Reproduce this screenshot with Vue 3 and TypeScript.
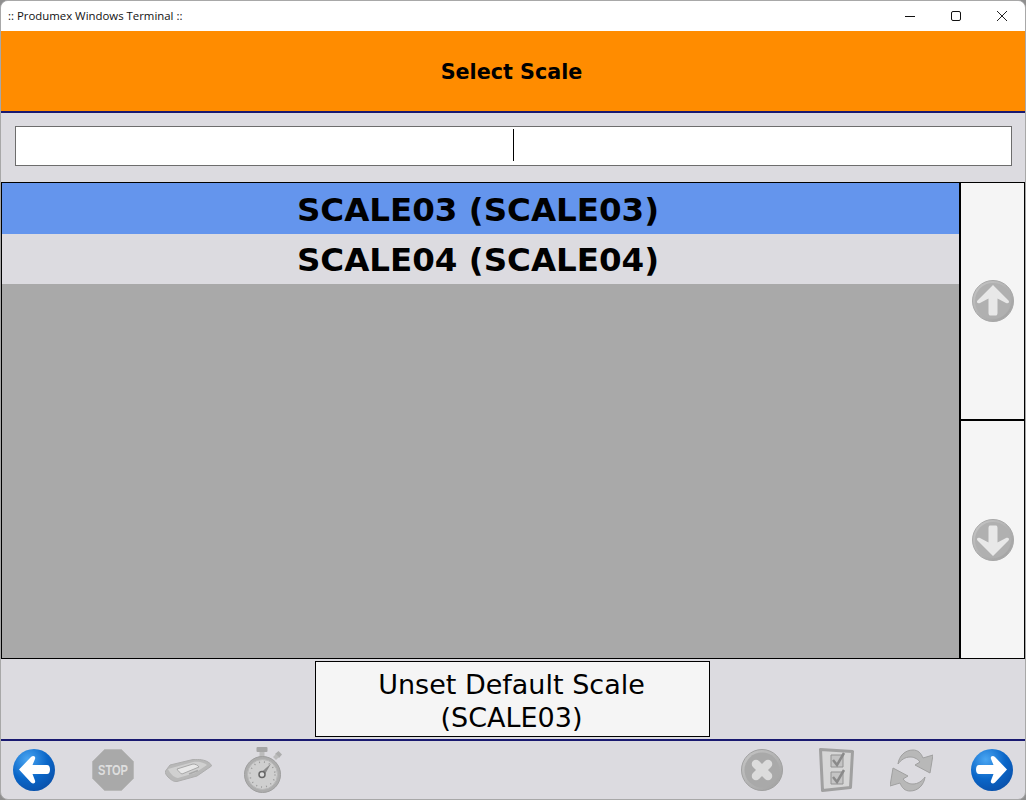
<script setup lang="ts">
const items = [
  { label: 'SCALE03 (SCALE03)', selected: true },
  { label: 'SCALE04 (SCALE04)', selected: false }
]

const arrowPath =
  'M22 6 37.500 21.500c1.500 2-.5 3.500-2.500 2.500L26.500 19.500V34c0 2-1 2.500-2 2.500h-5c-1 0-2-.5-2-2.500V19.500L9 24c-2 1-4-.5-2.500-2.500z'
const turnPath =
  'M8 15C9 7 15 1 23 1c5 0 8 3 10 8l10-3-3 18-15-8 5-3c-3-4-7-5-10-5-5 0-9 3-12 7z'
</script>

<template>
  <div class="window">
    <div class="titlebar">
      <span class="app-title">:: Produmex Windows Terminal ::</span>
      <div class="controls">
        <svg width="46" height="30" viewBox="0 0 46 30"><path d="M18 15.500h10" stroke="#111" stroke-width="1" fill="none" /></svg>
        <svg width="46" height="30" viewBox="0 0 46 30"><rect x="18.500" y="10.500" width="9" height="9" rx="1.500" stroke="#111" stroke-width="1" fill="none" /></svg>
        <svg width="46" height="30" viewBox="0 0 46 30"><path d="M18 10l10 10M28 10l-10 10" stroke="#222" stroke-width="1" fill="none" /></svg>
      </div>
    </div>

    <header class="page-head">Select Scale</header>

    <div class="search-zone">
      <div class="search-box"><i class="caret"></i></div>
    </div>

    <div class="list-zone">
      <ul class="list">
        <li v-for="item in items" :key="item.label" :class="{ selected: item.selected }">{{ item.label }}</li>
      </ul>
      <div class="scroller">
        <div class="scroll-btn up">
          <svg width="44" height="44" viewBox="0 0 44 44">
            <defs>
              <linearGradient id="greyDisc" x1="0" y1="0" x2="1" y2="1">
                <stop offset="0" stop-color="#c6c6c6" />
                <stop offset="1" stop-color="#a0a0a0" />
              </linearGradient>
            </defs>
            <circle cx="22" cy="22" r="20.500" fill="url(#greyDisc)" stroke="#a8a8a8" />
            <circle cx="22" cy="22" r="18" fill="#b0b0b0" />
            <path :d="arrowPath" fill="#e8e8e8" />
          </svg>
        </div>
        <div class="scroll-btn">
          <svg width="44" height="44" viewBox="0 0 44 44">
            <circle cx="22" cy="22" r="20.500" fill="url(#greyDisc)" stroke="#a8a8a8" />
            <circle cx="22" cy="22" r="18" fill="#b0b0b0" />
            <path :d="arrowPath" fill="#e8e8e8" transform="rotate(180 22 22)" />
          </svg>
        </div>
      </div>
    </div>

    <div class="action-zone">
      <button class="action">Unset Default Scale<br />(SCALE03)</button>
    </div>

    <footer class="nav">
      <div class="nav-group">
        <svg width="42" height="42" viewBox="0 0 42 42">
          <defs>
            <radialGradient id="blueDisc" cx=".35" cy=".25" r=".85">
              <stop offset="0" stop-color="#4aa6f2" />
              <stop offset=".55" stop-color="#0a66c8" />
              <stop offset="1" stop-color="#0a4ea6" />
            </radialGradient>
          </defs>
          <circle cx="21" cy="21" r="21" fill="url(#blueDisc)" />
          <path d="M6 20.500 18 8c2-2 5-1 4 2l-2.500 6H34c2 0 3 2 3 4.500S36 25 34 25H19.500l2.500 6.500c1 3-2 4-4 2z" fill="#fff" />
        </svg>
        <svg class="stop" width="42" height="42" viewBox="0 0 42 42">
          <path d="M12.500.5h17l12 12v17l-12 12h-17L.5 29.500v-17z" fill="#a9a9a9" stroke="#b8b8b8" />
          <text x="21" y="26" text-anchor="middle" textLength="30" lengthAdjust="spacingAndGlyphs" class="stop-text">STOP</text>
        </svg>
        <svg class="device" width="47" height="23" viewBox="0 0 47 23">
          <path d="M.5 12 5 6 28 .5c6-.5 12 .5 15 2.500 2.500 1.500 3.500 3 3.500 4L32 17 12 22.500c-3 .5-6-1.500-9-4.500C1 16 0 14 .5 12z" fill="#b8b8b8" stroke="#adadad" />
          <path d="M3 10 28 3c5-.5 10 0 14 3L30 14 13 19c-3 0-8-4-10-9z" fill="#d0d0d0" />
          <path d="M12 10 28 5c2 0 5 1 6 3L17 15c-2-1-4-3-5-5z" fill="#e8e8e8" stroke="#a8a8a8" />
          <path d="M24 15l9-3.500" stroke="#a8a8a8" stroke-width="1.500" />
        </svg>
        <svg class="watch" width="38" height="46" viewBox="0 0 38 46">
          <rect x="12.500" y="0" width="11" height="5" rx="1" fill="#a6a6a6" />
          <rect x="15.500" y="5" width="5" height="6" fill="#bcbcbc" />
          <path d="m31 7 3.500-3 3.500 3.500-3 3.500z" fill="#adadad" />
          <path d="m29 10 3-3 3 3-3 3z" fill="#bcbcbc" />
          <circle cx="18.500" cy="27.500" r="18" fill="#adadad" stroke="#9e9e9e" />
          <circle cx="18.500" cy="27.500" r="15" fill="#cfcfcf" stroke="#b8b8b8" />
          <circle cx="18.500" cy="27.500" r="12.500" fill="none" stroke="#9a9a9a" stroke-width="1.500" stroke-dasharray="1 4" />
          <path d="M16.500 26 27 16.500 20 29z" fill="#8c8c8c" />
          <circle cx="18" cy="27.500" r="3" fill="#dcdcdc" stroke="#666" stroke-width="1.500" />
        </svg>
      </div>
      <div class="nav-group">
        <svg width="42" height="42" viewBox="0 0 42 42">
          <circle cx="21" cy="21" r="20.500" fill="url(#greyDisc)" stroke="#a0a0a0" />
          <circle cx="21" cy="21" r="17.500" fill="#a9a9a9" />
          <path d="M15 15 27 27M27 15 15 27" stroke="#dcdcdc" stroke-width="8.500" stroke-linecap="round" />
        </svg>
        <svg class="check" width="35" height="46" viewBox="0 0 35 46">
          <path d="M1.500 2.500 33.500 4.500 31.500 40.500 3.500 43.500z" fill="#d6d6d6" stroke="#a0a0a0" stroke-width="3" stroke-linejoin="round" />
          <path d="M12 8h12v12H12zM12 25h12v12H12z" fill="#c4c4c4" stroke="#929292" />
          <path d="m14 13 4 5 7-12M14 30l4 5 7-12" fill="none" stroke="#8a8a8a" stroke-width="2.500" />
        </svg>
        <svg class="refresh" width="43" height="43" viewBox="0 0 43 43">
          <path :d="turnPath" fill="#b8b8b8" stroke="#a0a0a0" />
          <path :d="turnPath" fill="#b8b8b8" stroke="#a0a0a0" transform="rotate(180 21.500 21.500)" />
        </svg>
        <svg class="next" width="42" height="42" viewBox="0 0 42 42">
          <circle cx="21" cy="21" r="21" fill="url(#blueDisc)" />
          <path d="M36 20.500 24 8c-2-2-5-1-4 2l2.500 6H8c-2 0-3 2-3 4.500S6 25 8 25h14.500L20 31.500c-1 3 2 4 4 2z" fill="#fff" />
        </svg>
      </div>
    </footer>
  </div>
</template>

<style scoped>
.window {
  box-sizing: border-box;
  width: 1026px;
  height: 800px;
  display: flex;
  flex-direction: column;
  background: #dcdbe0;
  border: 1px solid #a8a8a8;
  border-radius: 8px;
  overflow: hidden;
  font-family: "DejaVu Sans", sans-serif;
  color: #000;
}

.titlebar {
  height: 30px;
  flex: none;
  display: flex;
  align-items: center;
  justify-content: space-between;
  background: #fff;
}

.app-title {
  padding: 0 0 1px 7px;
  font-family: "Open Sans", "Noto Sans", sans-serif;
  font-size: 11.400px;
  color: #111;
}

.controls {
  display: flex;
  height: 30px;
}

.page-head {
  height: 80px;
  flex: none;
  display: flex;
  align-items: center;
  justify-content: center;
  box-sizing: border-box;
  padding: 2px 3px 0 0;
  background: #ff8c00;
  font-size: 20.700px;
  font-weight: 700;
}

.search-zone {
  flex: none;
  padding: 13px 13px 16px 14px;
  border-top: 2px solid #191970;
}

.search-box {
  height: 38px;
  position: relative;
  background: #fff;
  border: 1px solid #6d6d6d;
}

.caret {
  position: absolute;
  left: 497px;
  top: 2px;
  width: 1px;
  height: 32px;
  background: #000;
}

.list-zone {
  height: 477px;
  flex: none;
  display: flex;
  box-sizing: border-box;
  border: 1px solid #000;
}

.list {
  flex: 1;
  margin: 0;
  padding: 0;
  list-style: none;
  background: #a9a9a9;
}

.list li {
  height: 50.500px;
  box-sizing: border-box;
  display: flex;
  align-items: center;
  justify-content: center;
  padding: 3px 5px 0 0;
  background: #dcdbe0;
  font-size: 32.500px;
  font-weight: 700;
}

.list li.selected {
  background: #6495ed;
}

.scroller {
  width: 63px;
  flex: none;
  display: flex;
  flex-direction: column;
  border-left: 2px solid #000;
}

.scroll-btn {
  flex: 1;
  display: flex;
  align-items: center;
  justify-content: center;
  background: #f5f5f5;
  border-top: 2px solid #000;
}

.scroll-btn.up {
  height: 236px;
  flex: none;
  border-top: none;
}

.action-zone {
  flex: none;
  display: flex;
  justify-content: center;
  padding: 2px 0;
}

.action {
  box-sizing: border-box;
  width: 395px;
  height: 76px;
  margin-left: -1px;
  padding: 3px 2px 0 0;
  background: #f5f5f5;
  border: 1px solid #000;
  border-radius: 0;
  font-family: inherit;
  font-size: 27px;
  line-height: 33px;
  color: #000;
}

.nav {
  flex: 1;
  display: flex;
  align-items: center;
  justify-content: space-between;
  padding: 0 12px;
  border-top: 2px solid #191970;
}

.nav-group {
  display: flex;
  align-items: center;
}

.stop { margin-left: 37px; overflow: visible; }
.device { margin-left: 31px; }
.watch { margin-left: 32px; margin-top: -1px; }
.check { margin-left: 36px; }
.refresh { margin-left: 36px; }
.next { margin-left: 38px; }

.stop-text {
  font-family: "Liberation Sans", sans-serif;
  font-size: 14.500px;
  font-weight: 700;
  fill: #dedede;
}
</style>

<style>
html, body {
  margin: 0;
  background: #8f8f8f;
}
</style>
